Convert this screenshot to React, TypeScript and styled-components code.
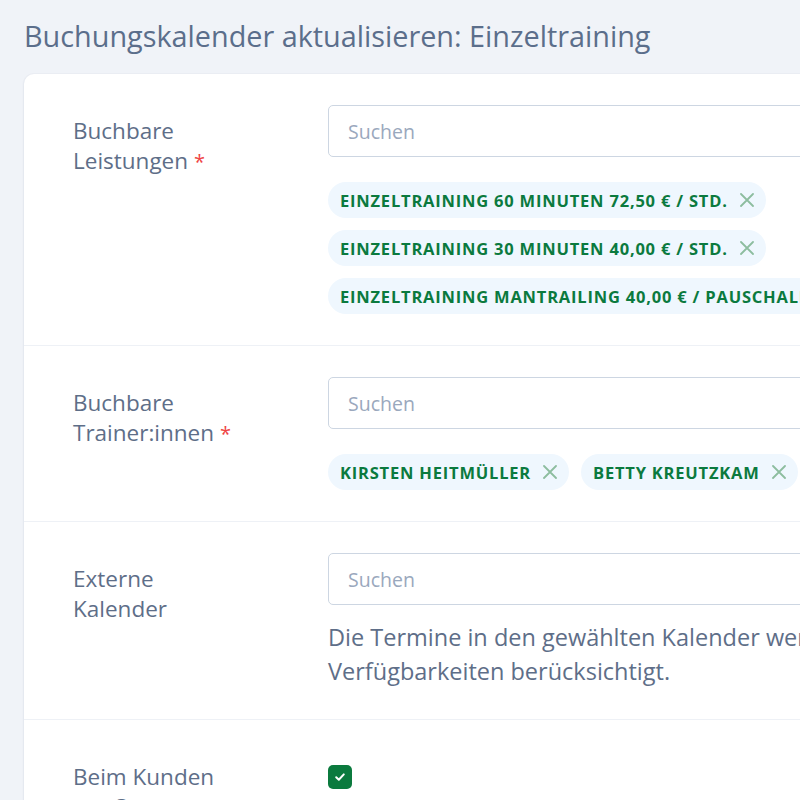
import React from "react";
import styled, { createGlobalStyle } from "styled-components";

const GlobalStyle = createGlobalStyle`
  html, body {
    margin: 0;
    padding: 0;
    background: #f0f3f8;
    overflow: hidden;
  }
  body {
    font-family: "Open Sans", "Noto Sans", sans-serif;
  }
  * { box-sizing: border-box; }
`;

const Page = styled.div`
  width: 1300px;
  padding: 17px 0 0 24px;
`;

const Title = styled.h1`
  margin: 0 0 19px 0;
  font-size: 28.8px;
  line-height: 38px;
  font-weight: 400;
  color: #5b6e8b;
`;

const Card = styled.div`
  width: 1175px;
  background: #ffffff;
  border-radius: 10px;
  box-shadow: 0 1px 3px rgba(30, 50, 90, 0.08), 0 0 0 1px rgba(30, 50, 90, 0.02);
`;

const Row = styled.div`
  display: grid;
  grid-template-columns: 255px 1fr;
  padding: 31px 49px 31px 49px;
  border-bottom: 1px solid #eef1f6;
  &:last-child { border-bottom: none; }
`;

const Label = styled.div`
  max-width: 170px;
  padding-top: 11px;
  font-size: 22.5px;
  line-height: 30px;
  color: #5e6e88;
`;

const Required = styled.span`
  color: #ef4444;
  margin-left: 6px;
  font-size: 20px;
`;

const Control = styled.div`
  display: flex;
  flex-direction: column;
  min-width: 0;
`;

const SearchInput = styled.input`
  height: 52px;
  width: 100%;
  border: 1px solid #cdd6e2;
  border-radius: 5px;
  padding: 0 19px;
  font-family: inherit;
  font-size: 19.5px;
  color: #334155;
  background: #fff;
  outline: none;
  &::placeholder { color: #9aa8bd; }
`;

const ChipList = styled.div`
  display: flex;
  flex-wrap: wrap;
  gap: 12px;
  margin-top: 25px;
`;

const Chip = styled.span`
  display: inline-flex;
  align-items: center;
  gap: 12px;
  height: 36px;
  padding: 0 12px;
  border-radius: 18px;
  background: #eff7fe;
  color: #0b7a3e;
  font-size: 16.5px;
  letter-spacing: 0.8px;
  font-weight: 700;
  text-transform: uppercase;
  white-space: nowrap;
`;

const RemoveIcon = styled.svg`
  width: 14px;
  height: 14px;
  flex: none;
  stroke: #8dbd9f;
  stroke-width: 1.8;
  stroke-linecap: round;
`;

const Help = styled.p`
  margin: 15px 0 0;
  font-size: 23.5px;
  line-height: 34px;
  color: #5e6e88;
`;

const CheckArea = styled.div`
  height: 52px;
  display: flex;
  align-items: center;
`;

const CheckBox = styled.span`
  width: 24px;
  height: 24px;
  border-radius: 5px;
  background: #0b7a3e;
  display: inline-flex;
  align-items: center;
  justify-content: center;
`;

const X = () => (
  <RemoveIcon viewBox="0 0 14 14" fill="none">
    <path d="M1 1L13 13M13 1L1 13" />
  </RemoveIcon>
);

type ChipsProps = { items: string[] };
const Chips = ({ items }: ChipsProps) => (
  <ChipList>
    {items.map((t) => (
      <Chip key={t}>
        {t}
        <X />
      </Chip>
    ))}
  </ChipList>
);

export default function App() {
  return (
    <>
      <GlobalStyle />
      <Page>
        <Title>Buchungskalender aktualisieren: Einzeltraining</Title>
        <Card>
          <Row>
            <Label>
              Buchbare Leistungen<Required>*</Required>
            </Label>
            <Control>
              <SearchInput placeholder="Suchen" />
              <Chips
                items={[
                  "Einzeltraining 60 Minuten 72,50 € / Std.",
                  "Einzeltraining 30 Minuten 40,00 € / Std.",
                  "Einzeltraining Mantrailing 40,00 € / Pauschale",
                ]}
              />
            </Control>
          </Row>
          <Row>
            <Label>
              Buchbare Trainer:innen<Required>*</Required>
            </Label>
            <Control>
              <SearchInput placeholder="Suchen" />
              <Chips items={["Kirsten Heitmüller", "Betty Kreutzkam"]} />
            </Control>
          </Row>
          <Row>
            <Label>Externe Kalender</Label>
            <Control>
              <SearchInput placeholder="Suchen" />
              <Help>
                Die Termine in den gewählten Kalender werden bei der Berechnung der
                Verfügbarkeiten berücksichtigt.
              </Help>
            </Control>
          </Row>
          <Row>
            <Label>Beim Kunden vor Ort</Label>
            <Control>
              <CheckArea>
                <CheckBox>
                  <svg width="12" height="12" viewBox="0 0 12 12" fill="none">
                    <path d="M2.2 6.3L4.8 8.8L9.8 3.4" stroke="#fff" strokeWidth="2" strokeLinecap="round" strokeLinejoin="round" />
                  </svg>
                </CheckBox>
              </CheckArea>
            </Control>
          </Row>
        </Card>
      </Page>
    </>
  );
}
